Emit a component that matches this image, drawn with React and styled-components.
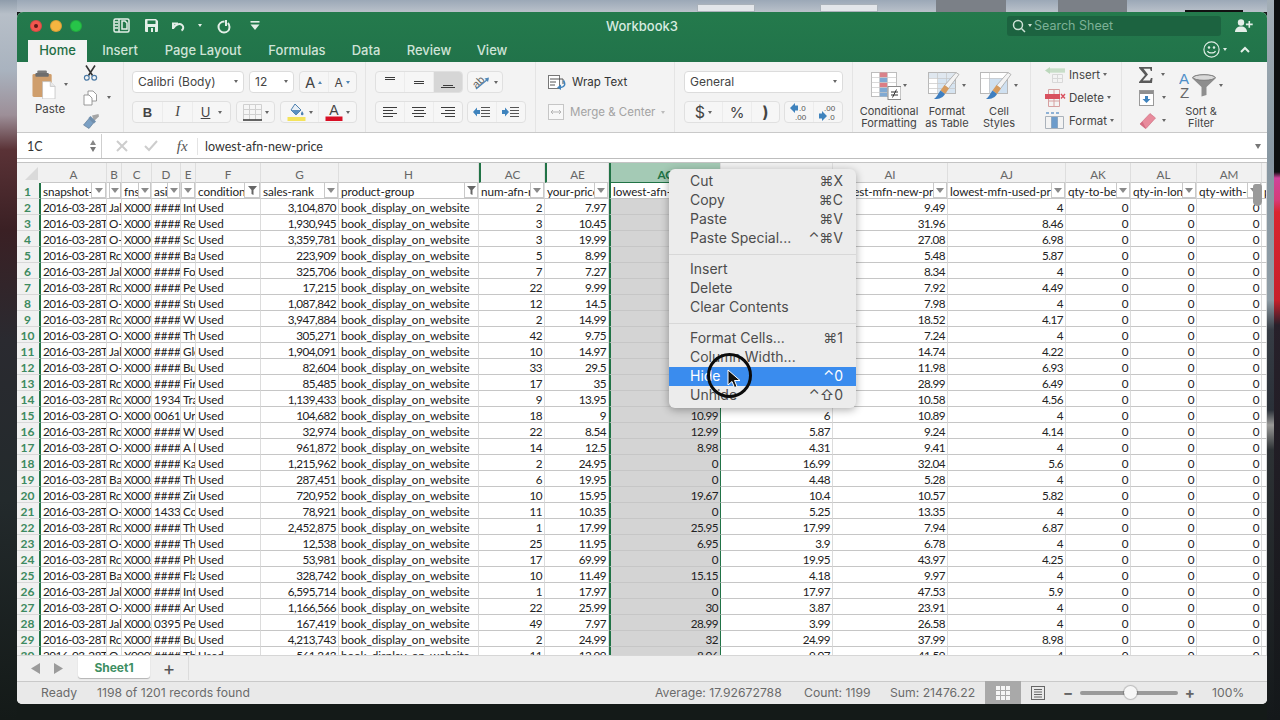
import React from 'react';
import styled, { createGlobalStyle } from 'styled-components';

const UI = '"Inter", "DejaVu Sans", sans-serif';
const CELL = 'Lato, "Liberation Sans", sans-serif';
const GREEN = '#217346';

const GlobalStyle = createGlobalStyle`
  html, body { margin: 0; padding: 0; background: #141a18; }
  * { box-sizing: border-box; }
`;

// column widths in px, same order as the sheet
const COLUMNS = [
  { name: 'A', w: 66, title: 'snapshot-date', filter: 15 },
  { name: 'B', w: 15, title: '', filter: 12 },
  { name: 'C', w: 30, title: 'fnsku', filter: 13 },
  { name: 'D', w: 29, title: 'asin', filter: 13 },
  { name: 'E', w: 15, title: '', filter: 14 },
  { name: 'F', w: 65, title: 'condition', filter: 16, funnel: true },
  { name: 'G', w: 78, title: 'sales-rank', filter: 14 },
  { name: 'H', w: 140, title: 'product-group', filter: 14, funnel: true },
  { name: 'AC', w: 66, title: 'num-afn-new', filter: 14, tick: true },
  { name: 'AE', w: 64, title: 'your-price', filter: 14, tick: true },
  { name: 'AG', w: 112, title: 'lowest-afn-new-price', selected: true },
  { name: 'AH', w: 112, title: 'lowest-afn-used-price' },
  { name: 'AI', w: 115, title: 'lowest-mfn-new-price', filter: 14 },
  { name: 'AJ', w: 118, title: 'lowest-mfn-used-price', filter: 14 },
  { name: 'AK', w: 65, title: 'qty-to-be-liq', filter: 14 },
  { name: 'AL', w: 66, title: 'qty-in-long-term', filter: 14 },
  { name: 'AM', w: 65, title: 'qty-with-removal', filter: 14 },
  { name: '', w: 5, title: 'p' },
];

const ROWS = [
  'Jal|X000VK2|####|Int|3,104,870|2|7.97|||9.49|4',
  'O-|X0007R3|####|Re|1,930,945|3|10.45|||31.96|8.46',
  'O-|X000GT1|####|Sc|3,359,781|3|19.99|||27.08|6.98',
  'Rc|X000VM8|####|Ba|223,909|5|8.99|||5.48|5.87',
  'Jal|X000VP4|####|Fo|325,706|7|7.27|||8.34|4',
  'Rc|X000VQ7|####|Pe|17,215|22|9.99|||7.92|4.49',
  'O-|X0007L2|####|Stu|1,087,842|12|14.5|||7.98|4',
  'Rc|X000VA6|####|Wi|3,947,884|2|14.99|||18.52|4.17',
  'O-|X0007N9|####|Th|305,271|42|9.75|||7.24|4',
  'Jal|X000VH3|####|Glo|1,904,091|10|14.97|||14.74|4.22',
  'O-|X0007D5|####|Bu|82,604|33|29.5|||11.98|6.93',
  'Rc|X000JW1|####|Fir|85,485|17|35|||28.99|6.49',
  'Rc|X000VB2|19340|Tra|1,139,433|9|13.95|||10.58|4.56',
  'O-|X000EF8|00617|Ur|104,682|18|9|10.99|6|10.89|4',
  'Rc|X000VC4|####|Wi|32,974|22|8.54|12.99|5.87|9.24|4.14',
  'O-|X0007G6|####|A l|961,872|14|12.5|8.98|4.31|9.41|4',
  'Rc|X000VU3|####|Ka|1,215,962|2|24.95|0|16.99|32.04|5.6',
  'Ba|X000JY7|####|Th|287,451|6|19.95|0|4.48|5.28|4',
  'Rc|X000VS2|####|Zir|720,952|10|15.95|19.67|10.4|10.57|5.82',
  'O-|X000TZ5|14330|Co|78,921|11|10.35|0|5.25|13.35|4',
  'Rc|X000VE9|####|Th|2,452,875|1|17.99|25.95|17.99|7.94|6.87',
  'O-|X0007J1|####|Th|12,538|25|11.95|6.95|3.9|6.78|4',
  'Rc|X000JK8|####|Ph|53,981|17|69.99|0|19.95|43.97|4.25',
  'Ba|X000JX3|####|Fla|328,742|10|11.49|15.15|4.18|9.97|4',
  'Jal|X000VV6|####|Int|6,595,714|1|17.97|0|17.97|47.53|5.9',
  'O-|X0007W4|####|An|1,166,566|22|25.99|30|3.87|23.91|4',
  'Jal|X000JB5|03950|Pe|167,419|49|7.97|28.99|3.99|26.58|4',
  'Rc|X000VD7|####|Bu|4,213,743|2|24.99|32|24.99|37.99|8.98',
  'O-|X000VF2|####|Th|561,343|11|12.99|8.06|9.07|41.59|4',
];

const Desktop = styled.div`
  position: relative;
  width: 1280px;
  height: 720px;
  overflow: hidden;
  padding: 12px 13px 16px 17px;
  background:
    linear-gradient(to bottom, #0d0f10 0, #0d0f10 172px, #d0429a 178px, #d83a78 200px, #d9252f 212px, #c81f2a 300px, #27202a 325px, #14181a 720px) right top / 6px 100% no-repeat,
    linear-gradient(to bottom, #a3aeb6 0, #8797a2 160px, #8f9da6 300px, #363c44 330px, #2a3038 410px, #9a9a98 425px, #2c3134 450px, #14181a 720px) 1267px 0 / 7px 100% no-repeat,
    linear-gradient(to bottom, #8f9cab 0, #b7bfc8 14px, #a9b3bf 70px, #9d8f98 115px, #5a3236 150px, #3a2024 230px, #2a2a30 340px, #232a2c 500px, #141a18 720px) left top / 17px 100% no-repeat,
    linear-gradient(to bottom, #9ba8b7 0, #b9c1ca 12px, #141a18 12px, #141a18 100%);
`;

const GhostWindow = styled.div`
  position: absolute;
  top: ${p => p.$top}px;
  left: ${p => p.$left}px;
  width: ${p => p.$w}px;
  height: ${p => 12 - p.$top}px;
  background: ${p => p.$bg};
  border: ${p => (p.$outlined ? '1px solid #aab2ba' : 'none')};
`;

const Window = styled.div`
  width: 1250px;
  height: 692px;
  display: flex;
  flex-direction: column;
  border-radius: 6px 6px 5px 5px;
  overflow: hidden;
  background: #fff;
  font-family: ${UI};
`;

const GreenHead = styled.header`
  height: 50px;
  flex: none;
  background: linear-gradient(#247a4c, #21734a);
`;

const TitleRow = styled.div`
  height: 27px;
  display: flex;
  align-items: center;
  position: relative;
  padding: 0 0 0 13px;
`;

const Lights = styled.div`
  display: flex;
  gap: 8px;
  margin-right: 24px;
`;

const Light = styled.span`
  width: 12px;
  height: 12px;
  border-radius: 50%;
  background: ${p => p.$c};
  box-shadow: inset 0 0 0 1px rgba(0, 0, 0, 0.12);
  display: flex;
  align-items: center;
  justify-content: center;
  &::after {
    content: '';
    display: ${p => (p.$dot ? 'block' : 'none')};
    width: 4px;
    height: 4px;
    border-radius: 50%;
    background: #5c1a18;
  }
`;

const QuickTools = styled.div`
  display: flex;
  align-items: center;
  gap: 0;
`;

const QuickSlot = styled.span`
  width: ${p => p.$w}px;
  display: flex;
  justify-content: center;
  align-items: center;
`;

const WindowTitle = styled.div`
  position: absolute;
  left: 575px;
  width: 100px;
  text-align: center;
  color: #d8ebe0;
  font-size: 13px;
  font-weight: 500;
`;

const SearchBox = styled.div`
  margin-left: auto;
  width: 214px;
  height: 20px;
  border-radius: 3px;
  background: #1c6340;
  display: flex;
  align-items: center;
  padding-left: 5px;
  color: #7db197;
  font-size: 12.5px;
  gap: 2px;
`;

const UserSlot = styled.span`
  width: 46px;
  display: flex;
  justify-content: center;
`;

const TabsRow = styled.nav`
  height: 23px;
  display: flex;
  align-items: flex-end;
  padding-left: 11px;
`;

const RibbonTab = styled.div`
  height: 22px;
  width: ${p => p.$w}px;
  display: flex;
  align-items: center;
  justify-content: center;
  padding-bottom: 2px;
  font-size: 13px;
  font-weight: 500;
  color: ${p => (p.$active ? '#1f6e45' : '#cfe3d7')};
  background: ${p => (p.$active ? '#f3f3f3' : 'transparent')};
`;

const HeadRight = styled.div`
  margin-left: auto;
  display: flex;
  align-items: center;
  padding: 0 7px 4px 0;
  gap: 3px;
  height: 22px;
`;

const Ribbon = styled.section`
  height: 71px;
  flex: none;
  display: flex;
  background: #f3f3f3;
  border-bottom: 1px solid #c9c9c9;
  color: #444;
`;

const Group = styled.div`
  width: ${p => p.$w}px;
  flex: ${p => (p.$grow ? '1' : 'none')};
  padding: 9px 0 0 ${p => p.$pad || 0}px;
  border-right: ${p => (p.$last ? 'none' : '1px solid #e4e4e4')};
  display: flex;
  margin: 0;
`;

const Stack = styled.div`
  display: flex;
  flex-direction: column;
  gap: 8px;
`;

const ToolRow = styled.div`
  display: flex;
  gap: ${p => (p.$gap === undefined ? 5 : p.$gap)}px;
  height: 22px;
`;

const PasteCol = styled.div`
  width: 66px;
  padding-left: 15px;
  margin-top: -2px;
  display: flex;
  flex-direction: column;
`;

const PasteIcon = styled.div`
  display: flex;
  align-items: center;
  gap: 8px;
  height: 30px;
`;

const PasteLabel = styled.div`
  font-size: 11.5px;
  margin-top: 3px;
  margin-left: 3px;
`;

const ClipCol = styled.div`
  display: flex;
  flex-direction: column;
  margin-top: -7px;
  height: 68px;
  justify-content: space-between;
  padding: 1px 0 3px;
`;

const ClipLine = styled.div`
  display: flex;
  align-items: center;
  gap: 9px;
`;

const Caret = styled.span`
  display: inline-block;
  flex: none;
  width: 0;
  height: 0;
  border-left: 2.5px solid transparent;
  border-right: 2.5px solid transparent;
  border-top: 3.5px solid ${p => p.$c || '#666'};
`;

const CaretUp = styled(Caret)`
  border-top: none;
  border-bottom: 3.5px solid ${p => p.$c || '#666'};
`;

const Field = styled.div`
  width: ${p => p.$w}px;
  height: 22px;
  background: #fff;
  border: 1px solid #dcdcdc;
  border-radius: 4px;
  display: flex;
  align-items: center;
  justify-content: space-between;
  padding: 0 5px 2px 5px;
  font-size: 12px;
  color: #444;
`;

const Seg = styled.div`
  width: ${p => p.$w}px;
  height: 22px;
  display: flex;
  border: 1px solid #e0e0e0;
  border-radius: 4px;
  background: #f6f6f6;
  overflow: hidden;
  flex: none;
`;

const SegBtn = styled.div`
  flex: ${p => (p.$w ? 'none' : '1')};
  width: ${p => (p.$w ? `${p.$w}px` : 'auto')};
  display: flex;
  align-items: center;
  justify-content: center;
  gap: 3px;
  background: ${p => (p.$pressed ? '#d6d6d6' : 'transparent')};
  font-family: ${p => p.$font || 'inherit'};
  font-size: ${p => p.$size || 12}px;
  font-weight: ${p => p.$weight || 400};
  font-style: ${p => (p.$italic ? 'italic' : 'normal')};
  color: #444;
  & + & { border-left: 1px solid #ececec; }
`;

const UnderU = styled.span`
  font-size: 13px;
  text-decoration: underline;
  margin-right: 5px;
`;

const WrapLine = styled.div`
  height: 22px;
  display: flex;
  align-items: center;
  gap: 6px;
  font-size: 11.5px;
  color: ${p => (p.$off ? '#a3a3a3' : '#333')};
`;

const BigBtn = styled.div`
  width: ${p => p.$w}px;
  display: flex;
  flex-direction: column;
  align-items: center;
`;

const BigIcon = styled.div`
  height: 29px;
  margin-bottom: 5px;
  display: flex;
  align-items: center;
  gap: 2px;
`;

const BigLabel = styled.div`
  font-size: 11px;
  line-height: 12px;
  text-align: center;
  color: #444;
  white-space: nowrap;
`;

const CellsCol = styled.div`
  display: flex;
  flex-direction: column;
  gap: 0;
  margin-top: -8px;
`;

const CellLine = styled.div`
  height: 23px;
  display: flex;
  align-items: center;
  gap: ${p => p.$gap || 3}px;
  font-size: 11.5px;
  color: #444;
`;

const FormulaBar = styled.div`
  height: 26px;
  flex: none;
  display: flex;
  align-items: center;
  padding-top: 1px;
  background: #fff;
  border-bottom: 1px solid #bdbdbd;
  font-size: 12.5px;
  color: #333;
`;

const NameBox = styled.div`
  width: 85px;
  height: 100%;
  display: flex;
  align-items: center;
  justify-content: space-between;
  padding: 0 5px 0 10px;
  border-right: 1px solid #cfcfcf;
  font-family: ${CELL};
`;

const Stepper = styled.span`
  display: flex;
  flex-direction: column;
  gap: 2px;
`;

const StepUp = styled(Caret)`
  border-top: none;
  border-left-width: 3.5px;
  border-right-width: 3.5px;
  border-bottom: 5px solid #888;
`;

const StepDown = styled(Caret)`
  border-left-width: 3.5px;
  border-right-width: 3.5px;
  border-top: 5px solid #777;
`;

const FxTools = styled.div`
  width: 96px;
  height: 17px;
  display: flex;
  align-items: center;
  border-right: 1px solid #e4e4e4;
`;

const FxSlot = styled.span`
  width: ${p => p.$w}px;
  padding-left: ${p => p.$pl || 0}px;
  display: flex;
  justify-content: center;
  font-family: "Liberation Serif", serif;
  font-style: italic;
  font-size: 15px;
  color: #555;
`;

const FormulaText = styled.div`
  flex: 1;
  padding-left: 7px;
  font-family: ${CELL};
`;

const FormulaEnd = styled.div`
  width: 12px;
  display: flex;
`;

const Sheet = styled.div`
  flex: 1;
  min-height: 0;
  overflow: hidden;
  padding-top: 3px;
  background: #fff;
  font-family: ${CELL};
  font-size: 11.7px;
  letter-spacing: -0.08px;
  color: #222;
`;

const HeadRow = styled.div`
  display: flex;
  height: 21px;
  background: #f1f1f1;
  border-top: 1px solid #c4c4c4;
`;

const Corner = styled.div`
  width: 24px;
  flex: none;
  display: flex;
  align-items: flex-end;
  justify-content: flex-end;
  padding: 0 3px 3px 0;
`;

const ColHead = styled.div`
  width: ${p => p.$w}px;
  flex: none;
  display: flex;
  align-items: center;
  justify-content: center;
  padding-top: 2px;
  color: ${p => (p.$selected ? GREEN : '#666')};
  font-weight: ${p => (p.$selected ? 700 : 400)};
  background: ${p => (p.$selected ? '#a4cab5' : 'transparent')};
  border-right: 1px solid #dedede;
  border-bottom: 1px solid ${p => (p.$selected ? GREEN : '#c8c8c8')};
  border-left: ${p => (p.$selected || p.$tick ? `2.5px solid ${GREEN}` : 'none')};
`;

const Row = styled.div`
  display: flex;
  height: 16px;
`;

const RowHead = styled.div`
  width: 24px;
  flex: none;
  background: #f1f1f1;
  border-right: 2px solid ${GREEN};
  border-bottom: 1px solid #d8d8d8;
  color: #3d8a60;
  font-size: 12px;
  font-weight: 700;
  text-align: center;
  line-height: 17px;
  padding-right: 1px;
`;

const Cell = styled.div`
  position: relative;
  width: ${p => p.$w}px;
  flex: none;
  height: 16px;
  line-height: 17px;
  overflow: hidden;
  white-space: nowrap;
  padding: 0 ${p => (p.$right ? 2 : 1)}px 0 2px;
  text-align: ${p => (p.$right ? 'right' : 'left')};
  letter-spacing: ${p => (p.$tight ? '-0.5px' : 'inherit')};
  background: ${p => (p.$selected ? '#d4d4d4' : '#fff')};
  border-right: 1px solid ${p => (p.$selected ? GREEN : '#dcdcdc')};
  border-bottom: 1px solid #c6c6c6;
  border-left: ${p => (p.$selected ? `2.5px solid ${GREEN}` : 'none')};
`;

const TitleCell = styled(Cell)`
  background: #fff;
`;

const FilterBtn = styled.span`
  position: absolute;
  right: 0;
  top: 0;
  width: ${p => p.$w}px;
  height: 15px;
  background: #fff;
  border: 1px solid #c9c9c9;
  border-top: none;
  display: flex;
  align-items: center;
  justify-content: center;
`;

const FilterTri = styled.span`
  width: 0;
  height: 0;
  border-left: 4px solid transparent;
  border-right: 4px solid transparent;
  border-top: 5px solid #8a8a8a;
`;

const ResizeBlob = styled.div`
  position: absolute;
  left: 1253px;
  top: 184px;
  width: 9px;
  height: 22px;
  border-radius: 3px 3px 5px 5px;
  background: #9a9a9a;
`;

const TabBar = styled.div`
  height: 26px;
  flex: none;
  display: flex;
  align-items: flex-start;
  background: #efefef;
  padding-left: 7px;
  border-top: 1px solid #d6d6d6;
  margin-top: 0;
`;

const ArrowSlot = styled.span`
  width: 23px;
  height: 24px;
  display: flex;
  align-items: center;
  justify-content: center;
`;

const SheetTab = styled.div`
  width: 72px;
  height: 22px;
  margin-left: 8px;
  background: #fff;
  border-radius: 0 0 3px 3px;
  box-shadow: 0 1px 1px rgba(0, 0, 0, 0.25);
  color: #3d8f63;
  font-size: 12px;
  font-weight: 700;
  display: flex;
  align-items: center;
  justify-content: center;
`;

const AddSheet = styled.div`
  width: 39px;
  height: 24px;
  border-right: 1px solid #dcdcdc;
  display: flex;
  align-items: center;
  justify-content: center;
  font-size: 19px;
  color: #555;
`;

const StatusBar = styled.footer`
  height: 23px;
  flex: none;
  display: flex;
  align-items: center;
  padding-bottom: 1px;
  background: #e9e9e9;
  border-top: 1px solid #c9c9c9;
  font-size: 12.2px;
  color: #6b6b6b;
`;

const StatusText = styled.span`
  margin-left: ${p => p.$ml}px;
  width: ${p => p.$w}px;
  flex: none;
  white-space: nowrap;
`;

const ViewBtn = styled.div`
  width: ${p => p.$w}px;
  height: 23px;
  margin-left: ${p => p.$ml || 0}px;
  display: flex;
  align-items: center;
  justify-content: center;
  background: ${p => (p.$on ? '#a9a9a9' : 'transparent')};
`;

const Zoom = styled.div`
  margin-left: 8px;
  width: 132px;
  display: flex;
  align-items: center;
  gap: 7px;
  font-size: 15px;
  font-weight: 700;
  color: #666;
`;

const SliderTrack = styled.div`
  position: relative;
  flex: 1;
  height: 4px;
  border-radius: 2px;
  background: #9a9a9a;
`;

const SliderThumb = styled.span`
  position: absolute;
  left: 44px;
  top: -4.5px;
  width: 13px;
  height: 13px;
  border-radius: 50%;
  background: #f7f7f7;
  box-shadow: 0 0 1px 1px rgba(0, 0, 0, 0.2);
`;

const Menu = styled.div`
  position: absolute;
  left: 669px;
  top: 169px;
  width: 187px;
  padding: 3px 0;
  border-radius: 6px;
  background: #ececec;
  box-shadow: 0 2px 9px rgba(0, 0, 0, 0.32);
  font-family: ${UI};
  font-size: 14px;
  color: #4c4c4c;
`;

const MenuItem = styled.div`
  height: 19px;
  display: flex;
  align-items: center;
  justify-content: space-between;
  padding: 0 13px 2px 21px;
  background: ${p => (p.$active ? '#3a8cee' : 'transparent')};
  color: ${p => (p.$active ? '#fff' : 'inherit')};
`;

const MenuRule = styled.div`
  height: 1px;
  margin: 6px 0 5px;
  background: #d8d8d8;
`;

const Ring = styled.div`
  position: absolute;
  left: 707px;
  top: 353px;
  width: 45px;
  height: 45px;
  border-radius: 50%;
  border: 3.5px solid #0b0b0b;
`;

const Pointer = styled.svg`
  position: absolute;
  left: 727px;
  top: 369px;
`;

// ---- icons ----
const SidebarIcon = () => (
  <svg width="17" height="15" viewBox="0 0 17 15" fill="none" stroke="#e4efe8" strokeWidth="1.5">
    <rect x="1" y="1" width="15" height="13" rx="1.5" />
    <path d="M6 1v13M1.5 4H5M1.5 7H5M1.5 10H5M9 3h3l2 2v6H9z" />
  </svg>
);
const SaveIcon = () => (
  <svg width="15" height="15" viewBox="0 0 15 15">
    <path d="M1 2a1 1 0 0 1 1-1h10l2 2v10a1 1 0 0 1-1 1H2a1 1 0 0 1-1-1z" fill="#e4efe8" />
    <rect x="3.5" y="2.5" width="8" height="3.5" fill="#247a4c" />
    <rect x="4" y="9" width="7" height="5" fill="#247a4c" />
    <rect x="7" y="10" width="2" height="4" fill="#e4efe8" />
  </svg>
);
const UndoIcon = () => (
  <svg width="16" height="13" viewBox="0 0 16 13" fill="none" stroke="#e4efe8" strokeWidth="2">
    <path d="M3 10V4M2 4.5h6" />
    <path d="M3.5 9c1.5-3.5 6-5 8.5-3 2 1.6 1.5 4.5-.5 5.5" />
  </svg>
);
const RedoIcon = () => (
  <svg width="14" height="16" viewBox="0 0 14 16" fill="none" stroke="#e4efe8" strokeWidth="2">
    <path d="M9 2v5h-1" />
    <path d="M7.5 3.5C4 3.6 1.5 6 1.5 9s2.4 5.5 5.5 5.5 5.5-2.4 5.5-5.500c0-1.600-.6-3-1.600-4" />
  </svg>
);
const CustomizeIcon = () => (
  <svg width="10" height="9" viewBox="0 0 10 9" fill="#e4efe8">
    <rect x="0.5" y="0" width="9" height="1.6" />
    <path d="M0.5 3.5h9L5 9z" />
  </svg>
);
const SearchIcon = () => (
  <svg width="14" height="14" viewBox="0 0 14 14" fill="none" stroke="#cfe3d7" strokeWidth="1.5">
    <circle cx="6" cy="6" r="4.5" />
    <path d="M9.5 9.5 13 13" />
  </svg>
);
const AddUserIcon = () => (
  <svg width="18" height="13" viewBox="0 0 18 13" fill="#e4efe8">
    <circle cx="6" cy="3.5" r="3.2" />
    <path d="M0 13c0-3.5 2.5-5.5 6-5.5s6 2 6 5.5z" />
    <path d="M13.5 2h1.6v2.6h2.6v1.6h-2.6v2.6h-1.6V6.2h-2.6V4.6h2.6z" />
  </svg>
);
const SmileIcon = () => (
  <svg width="17" height="17" viewBox="0 0 17 17" fill="none" stroke="#dcebe2" strokeWidth="1.2">
    <circle cx="8.5" cy="8.5" r="7.6" />
    <circle cx="6" cy="6.5" r="0.7" fill="#dcebe2" />
    <circle cx="11" cy="6.5" r="0.7" fill="#dcebe2" />
    <path d="M4.5 10c1 2.6 7 2.6 8 0" />
  </svg>
);
const ChevronUp = () => (
  <svg width="10" height="7" viewBox="0 0 10 7" fill="none" stroke="#e4efe8" strokeWidth="2">
    <path d="M1 6l4-4 4 4" />
  </svg>
);
const PasteSvg = () => (
  <svg width="24" height="29" viewBox="0 0 25 30">
    <rect x="0.5" y="4" width="20" height="24" rx="1.5" fill="#cf9e6c" />
    <rect x="5.5" y="0.5" width="10" height="3" rx="1" fill="#7a7a7a" />
    <rect x="3.5" y="3" width="14" height="4" rx="1" fill="#6d6d6d" />
    <path d="M11 12h8l5 5v13H11z" fill="#fff" stroke="#bbb" strokeWidth="0.7" />
    <path d="M19 12v5h5" fill="#e8e8e8" stroke="#bbb" strokeWidth="0.7" />
  </svg>
);
const ScissorsSvg = () => (
  <svg width="15" height="16" viewBox="0 0 15 16" fill="none">
    <path d="M3 0.5 9.5 10.5M12 0.5 5.5 10.5" stroke="#333" strokeWidth="1.6" />
    <circle cx="3.8" cy="12.8" r="2.4" stroke="#4b7aa5" strokeWidth="1.2" />
    <circle cx="11.2" cy="12.8" r="2.4" stroke="#4b7aa5" strokeWidth="1.2" />
  </svg>
);
const CopySvg = () => (
  <svg width="15" height="16" viewBox="0 0 15 16" fill="#fff" stroke="#8f8f8f" strokeWidth="0.9">
    <path d="M5 1h5l3.5 3.5V11H5z" />
    <path d="M1 5h5l3 3v7H1z" />
  </svg>
);
const BrushSvg = () => (
  <svg width="17" height="15" viewBox="0 0 17 15">
    <path d="M9 1.5 15.5 0 16 2.5 11 7z" fill="#a5a5a5" />
    <path d="M7.5 2 13 7.5 11 9.5 5.5 4z" fill="#6f8fae" />
    <path d="M6 4.5 10.5 9 6 14.5 0.5 11z" fill="#7ba0c4" stroke="#55708c" strokeWidth="0.6" />
  </svg>
);
const BorderSvg = () => (
  <svg width="19" height="17" viewBox="0 0 19 17" fill="none">
    <path d="M.5.5h18M.5 5.5h18M.5 10.5h18M.5.5v15M6.5.5v15M12.5.5v15M18.5.5v15" stroke="#d0d0d0" />
    <path d="M0 16h19" stroke="#333" strokeWidth="1.4" />
  </svg>
);
const FillSvg = () => (
  <svg width="19" height="18" viewBox="0 0 19 18">
    <path d="M8 1 14 7 9 12 4 7z" fill="#e9eff5" stroke="#4f81b0" strokeWidth="1" />
    <path d="M4.5 7h9L9 12z" fill="#5b8fc0" />
    <path d="M15 8c1 1.5 1.5 2.2 1.5 3a1.3 1.3 0 0 1-2.6 0c0-.8.5-1.500 1.100-3z" fill="#4f81b0" />
    <rect x="0.5" y="14" width="18" height="4" fill="#f4e35c" />
  </svg>
);
const FontColorSvg = () => (
  <svg width="18" height="18" viewBox="0 0 18 18">
    <text x="9" y="11.5" textAnchor="middle" fontSize="14" fontFamily="Liberation Sans" fill="#444">A</text>
    <rect x="0.5" y="13.5" width="17" height="4.5" fill="#d80f25" />
  </svg>
);
const Lines = ({ rows }) => (
  <svg width="16" height="14" viewBox="0 0 16 14" stroke="#3c3c3c" strokeWidth="1" fill="none">
    {rows.map((r, i) => <path key={i} d={`M${r[1]} ${r[0]}.5H${r[2]}`} />)}
  </svg>
);
const OrientSvg = () => (
  <svg width="19" height="18" viewBox="0 0 19 18" fill="none">
    <text x="0" y="13" fontSize="11" fontFamily="Liberation Sans" fill="#666" transform="rotate(-45 6 9)">ab</text>
    <path d="M4 16 16 6" stroke="#4f87b8" strokeWidth="1.3" />
    <path d="M12.5 5.5 17 4.5 16 9z" fill="#4f87b8" />
  </svg>
);
const IndentSvg = ({ right }) => (
  <svg width="18" height="12" viewBox="0 0 18 12" fill="none">
    <path d="M8 1.5h9M8 4.5h9M8 7.5h9M8 10.5h9" stroke="#555" />
    <path d={right ? 'M0 4h3V1.500L7 6 3 10.500V8H0z' : 'M7 4H4V1.500L0 6l4 4.500V8h3z'} fill="#3f83bd" />
  </svg>
);
const WrapSvg = () => (
  <svg width="18" height="15" viewBox="0 0 18 15" fill="none">
    <rect x="0.5" y="0.5" width="11" height="13" fill="#fff" stroke="#777" />
    <path d="M2 4h13v5M2 7h6M2 10h5" stroke="#555" />
    <path d="M15.5 5.5c2.5 4 1 7-4 7" stroke="#3f83bd" strokeWidth="1.5" />
    <path d="M13 9.5 9 12.500l4 2.500z" fill="#3f83bd" />
  </svg>
);
const MergeSvg = () => (
  <svg width="16" height="16" viewBox="0 0 16 16" fill="none" stroke="#c6c6c6">
    <rect x="0.5" y="0.5" width="15" height="15" fill="#f8f8f8" />
    <path d="M3 8h10M3 8l2-2M3 8l2 2M13 8l-2-2M13 8l-2 2" stroke="#b5b5b5" />
  </svg>
);
const DecimalSvg = ({ dec }) => (
  <svg width="26" height="18" viewBox="0 0 26 18">
    <text x={dec ? 9 : 13} y="7.5" fontSize="8" fontFamily="Liberation Sans" fill="#555">{dec ? '.00' : '.0'}</text>
    <text x={dec ? 13 : 9} y="16.5" fontSize="8" fontFamily="Liberation Sans" fill="#555">{dec ? '.0' : '.00'}</text>
    <path d={dec ? 'M4 10.500h3V8l5 5-5 5v-2.500H4z' : 'M12 2.500H9V0L4 5l5 5V7.500h3z'} fill="#3f83bd" />
  </svg>
);
const CondSvg = () => (
  <svg width="30" height="28" viewBox="0 0 30 28">
    <rect x="0.5" y="0.5" width="25" height="24" fill="#fff" stroke="#bdbdbd" />
    <rect x="8.5" y="0.5" width="8" height="5" fill="#d9828a" />
    <rect x="8.5" y="5.5" width="8" height="5" fill="#7fa9d3" />
    <rect x="8.5" y="10.5" width="8" height="5" fill="#dc7d84" />
    <rect x="8.5" y="15.5" width="8" height="9" fill="#7fa9d3" />
    <path d="M.5 5.500h25M.5 10.500h25M.5 15.500h25M.5 20.500h25M8.500.5v24M16.500.5v24" stroke="#c9c9c9" strokeWidth="0.7" fill="none" />
    <rect x="17" y="14.5" width="13" height="13" fill="#fff" stroke="#8a8a8a" />
    <path d="M20 20h7M20 23h7M25.500 17.500l-4 8" stroke="#333" fill="none" />
  </svg>
);
const BrushBody = () => (
  <>
    <path d="M28 0.500 31 2.500 20.500 16.500 16.500 13.500z" fill="#f3f3f3" stroke="#9c9c9c" strokeWidth="0.7" />
    <path d="M16.500 13 21 16.500 17 22 12.500 18.500z" fill="#d69b5e" />
    <path d="M12.500 18.500 17 22c-2 4-7 5.500-11 5 2.500-1.500 4-5 6.500-8.500z" fill="#3f7fc0" />
  </>
);
const TableSvg = () => (
  <svg width="32" height="28" viewBox="0 0 32 28">
    <rect x="0.5" y="0.5" width="27" height="21" fill="#fff" stroke="#b8b8b8" />
    <rect x="1" y="1" width="26" height="5" fill="#dfe7ef" />
    <rect x="10" y="6" width="17" height="15" fill="#d6e4f1" />
    <path d="M.5 6.500h27M.5 11.500h27M.5 16.500h27M9.500.5v21M18.500.5v21" stroke="#c6c6c6" strokeWidth="0.7" fill="none" />
    <BrushBody />
  </svg>
);
const StylesSvg = () => (
  <svg width="32" height="28" viewBox="0 0 32 28">
    <rect x="0.5" y="0.5" width="27" height="21" fill="#fff" stroke="#b8b8b8" />
    <rect x="9" y="6" width="18" height="15" fill="#cfe0f0" />
    <path d="M.5 6.500h27M9.500.5v21" stroke="#c6c6c6" strokeWidth="0.7" fill="none" />
    <BrushBody />
  </svg>
);
const InsertSvg = () => (
  <svg width="21" height="16" viewBox="0 0 21 16" fill="none">
    <path d="M5 1h15v5H5z" fill="#d6e6d6" />
    <path d="M0 3.500 5 0v7z" fill="#bcd8bc" />
    <path d="M5 3.500h15" stroke="#c8ddc8" strokeWidth="3" />
    <path d="M7.500 7.500h10v8h-10zM7.500 11.500h10M12.500 7.500v8" stroke="#d8d8d8" />
  </svg>
);
const DeleteSvg = () => (
  <svg width="21" height="18" viewBox="0 0 21 18" fill="none">
    <path d="M3.500.5h11v17h-11zM3.500 12h11M9 .5v17" stroke="#d6a0a0" />
    <rect x="0" y="5" width="15" height="5" fill="#d8505e" />
    <path d="M16 5l4 4.500M20 5l-4 4.500" stroke="#d8505e" strokeWidth="1.4" />
  </svg>
);
const FormatSvg = () => (
  <svg width="21" height="17" viewBox="0 0 21 17" fill="none">
    <path d="M.5 4.500h18v12H.5zM6.500 4.500v12M12.500 4.500v12" stroke="#aab2bb" />
    <rect x="6.5" y="5" width="6" height="11" fill="#6d9ccb" />
    <path d="M1 1h3M6 1h3M11 1h3" stroke="#6d9ccb" strokeWidth="1.5" />
  </svg>
);
const SigmaSvg = () => (
  <svg width="14" height="16" viewBox="0 0 14 16" fill="#5a5a5a">
    <path d="M0 0h13v4h-1.200l-.8-2.200H4.500L9 7.500 3.800 13.500H11l.9-2.500H13.500L13 16H0v-1l6-7L0 1z" />
  </svg>
);
const FillDownSvg = () => (
  <svg width="15" height="16" viewBox="0 0 15 16" fill="none">
    <rect x="0.5" y="0.5" width="14" height="15" fill="#fff" stroke="#9a9a9a" />
    <rect x="1" y="1" width="13" height="3" fill="#8f8f8f" />
    <path d="M6 6h3v3h2.500L7.500 13 3.500 9H6z" fill="#3f83bd" />
  </svg>
);
const EraserSvg = () => (
  <svg width="17" height="16" viewBox="0 0 17 16">
    <path d="M11 .5 16.500 5 7 15.500 1 11z" fill="#e88b9c" stroke="#c96a7c" strokeWidth="0.6" />
    <path d="M1 11 6 15.500 7 15.500 3.500 8.500z" fill="#d46d82" />
  </svg>
);
const SortSvg = () => (
  <svg width="38" height="29" viewBox="0 0 38 29">
    <text x="0" y="13" fontSize="15" fontFamily="Liberation Sans" fill="#4f8fc8">A</text>
    <text x="1" y="27" fontSize="15" fontFamily="Liberation Sans" fill="#666">Z</text>
    <path d="M13 7a12 3.500 0 0 1 24 0L27.500 16v8l-5 1.500V16z" fill="#8e8e8e" />
    <ellipse cx="25" cy="6.5" rx="11" ry="2.800" fill="#d9d9d9" stroke="#7c7c7c" />
  </svg>
);
const XSvg = () => (
  <svg width="12" height="12" viewBox="0 0 12 12" stroke="#cdcdcd" strokeWidth="2"><path d="M1 1l10 10M11 1 1 11" /></svg>
);
const CheckSvg = () => (
  <svg width="14" height="12" viewBox="0 0 14 12" fill="none" stroke="#cdcdcd" strokeWidth="2"><path d="M1 6l4 4 8-9" /></svg>
);
const TriSvg = ({ left }) => (
  <svg width="9" height="11" viewBox="0 0 9 11" fill="#9b9b9b"><path d={left ? 'M9 0v11L0 5.500z' : 'M0 0v11l9-5.500z'} /></svg>
);
const NormalViewSvg = () => (
  <svg width="14" height="14" viewBox="0 0 14 14" fill="#f6f6f6">
    {[0, 5, 10].map(y => [0, 5, 10].map(x => <rect key={`${x}${y}`} x={x} y={y} width="4" height="4" />))}
  </svg>
);
const PageViewSvg = () => (
  <svg width="14" height="14" viewBox="0 0 14 14" fill="none" stroke="#666">
    <rect x="0.5" y="0.5" width="13" height="13" />
    <path d="M3 3.500h8M3 6h8M3 8.500h8M3 11h8" />
  </svg>
);
const CornerSvg = () => (
  <svg width="13" height="13" viewBox="0 0 13 13"><path d="M13 0v13H0z" fill="#dadada" /></svg>
);
const FunnelTri = () => (
  <svg width="9" height="9" viewBox="0 0 9 9" fill="#666"><path d="M0 0h9L5.500 4v5l-2-1V4z" /></svg>
);

const Top = [[2, 3, 13], [4, 3, 13]];
const Mid = [[6, 3, 13], [8, 3, 13]];
const Bot = [[10, 3, 13], [12, 1, 15]];
const AL = [[2, 1, 15], [5, 1, 11], [8, 1, 15], [11, 1, 11]];
const AC = [[2, 1, 15], [5, 3, 13], [8, 1, 15], [11, 3, 13]];
const AR = [[2, 1, 15], [5, 5, 15], [8, 1, 15], [11, 5, 15]];

function Cells({ row, index }) {
  const [b, c, d, e, rank, num, price, low, used, ai, aj] = row.split('|');
  const values = [
    ['2016-03-28T07:14', false], [b, false], [c, false], [d, false], [e, false], ['Used', false],
    [rank, true], ['book_display_on_website', false], [num, true], [price, true],
    [low, true], [used, true], [ai, true], [aj, true], ['0', true], ['0', true], ['0', true], ['', false],
  ];
  return (
    <Row>
      <RowHead>{index + 2}</RowHead>
      {values.map(([v, right], i) => (
        <Cell
          key={i}
          $w={COLUMNS[i].w}
          $right={right}
          $tight={right || i === 0 || i === 2}
          $selected={COLUMNS[i].selected}
        >
          {v}
        </Cell>
      ))}
    </Row>
  );
}

function App() {
  return (
    <Desktop>
      <GlobalStyle />
      <GhostWindow $left={697} $top={4} $w={58} $bg="#e3e6ea" $outlined />
      <GhostWindow $left={820} $top={4} $w={58} $bg="#e3e6ea" $outlined />
      <GhostWindow $left={936} $top={0} $w={70} $bg="#7b8087" />
      <GhostWindow $left={1058} $top={0} $w={69} $bg="#7b8087" />
      <GhostWindow $left={1185} $top={10} $w={58} $bg="#111" />

      <Window>
        <GreenHead>
          <TitleRow>
            <Lights>
              <Light $c="#f2564e" $dot />
              <Light $c="#f5b540" />
              <Light $c="#27c549" />
            </Lights>
            <QuickTools>
              <QuickSlot $w={30}><SidebarIcon /></QuickSlot>
              <QuickSlot $w={31}><SaveIcon /></QuickSlot>
              <QuickSlot $w={22}><UndoIcon /></QuickSlot>
              <QuickSlot $w={22}><Caret $c="#e4efe8" /></QuickSlot>
              <QuickSlot $w={26}><RedoIcon /></QuickSlot>
              <QuickSlot $w={36}><CustomizeIcon /></QuickSlot>
            </QuickTools>
            <WindowTitle>Workbook3</WindowTitle>
            <SearchBox>
              <SearchIcon />
              <Caret $c="#cfe3d7" />
              <span>Search Sheet</span>
            </SearchBox>
            <UserSlot><AddUserIcon /></UserSlot>
          </TitleRow>
          <TabsRow>
            <RibbonTab $active $w={59}>Home</RibbonTab>
            <RibbonTab $w={66}>Insert</RibbonTab>
            <RibbonTab $w={100}>Page Layout</RibbonTab>
            <RibbonTab $w={88}>Formulas</RibbonTab>
            <RibbonTab $w={50}>Data</RibbonTab>
            <RibbonTab $w={76}>Review</RibbonTab>
            <RibbonTab $w={50}>View</RibbonTab>
            <HeadRight>
              <SmileIcon />
              <Caret $c="#dcebe2" />
              <QuickSlot $w={30}><ChevronUp /></QuickSlot>
            </HeadRight>
          </TabsRow>
        </GreenHead>

        <Ribbon>
          <Group $w={107}>
            <PasteCol>
              <PasteIcon><PasteSvg /><Caret /></PasteIcon>
              <PasteLabel>Paste</PasteLabel>
            </PasteCol>
            <ClipCol>
              <ClipLine><ScissorsSvg /></ClipLine>
              <ClipLine><CopySvg /><Caret /></ClipLine>
              <ClipLine><BrushSvg /></ClipLine>
            </ClipCol>
          </Group>

          <Group $w={242} $pad={8}>
            <Stack>
              <ToolRow>
                <Field $w={112}>Calibri (Body)<Caret /></Field>
                <Field $w={45}>12<Caret /></Field>
                <Seg $w={58}>
                  <SegBtn $size={15}>A<CaretUp $c="#4f87b8" /></SegBtn>
                  <SegBtn $size={12}>A<Caret $c="#4f87b8" /></SegBtn>
                </Seg>
              </ToolRow>
              <ToolRow>
                <Seg $w={99}>
                  <SegBtn $w={29} $weight={700} $font={'"Liberation Sans", sans-serif'} $size={13}>B</SegBtn>
                  <SegBtn $w={30} $italic $font={'"Liberation Serif", serif'} $size={14}>I</SegBtn>
                  <SegBtn><UnderU>U</UnderU><Caret /></SegBtn>
                </Seg>
                <Seg $w={39}><SegBtn><BorderSvg /><Caret /></SegBtn></Seg>
                <Seg $w={77}>
                  <SegBtn><FillSvg /><Caret /></SegBtn>
                  <SegBtn><FontColorSvg /><Caret /></SegBtn>
                </Seg>
              </ToolRow>
            </Stack>
          </Group>

          <Group $w={170} $pad={9}>
            <Stack>
              <ToolRow $gap={4}>
                <Seg $w={88}>
                  <SegBtn><Lines rows={Top} /></SegBtn>
                  <SegBtn><Lines rows={Mid} /></SegBtn>
                  <SegBtn $pressed><Lines rows={Bot} /></SegBtn>
                </Seg>
                <Seg $w={36}><SegBtn><OrientSvg /><Caret /></SegBtn></Seg>
              </ToolRow>
              <ToolRow $gap={4}>
                <Seg $w={88}>
                  <SegBtn><Lines rows={AL} /></SegBtn>
                  <SegBtn><Lines rows={AC} /></SegBtn>
                  <SegBtn><Lines rows={AR} /></SegBtn>
                </Seg>
                <Seg $w={59}>
                  <SegBtn><IndentSvg /></SegBtn>
                  <SegBtn><IndentSvg right /></SegBtn>
                </Seg>
              </ToolRow>
            </Stack>
          </Group>

          <Group $w={139} $pad={12}>
            <Stack>
              <WrapLine><WrapSvg />Wrap Text</WrapLine>
              <WrapLine $off><MergeSvg />Merge &amp; Center<Caret $c="#bbb" /></WrapLine>
            </Stack>
          </Group>

          <Group $w={178} $pad={9}>
            <Stack>
              <Field $w={159}>General<Caret /></Field>
              <ToolRow $gap={4}>
                <Seg $w={96}>
                  <SegBtn $w={37} $size={16}>$<Caret /></SegBtn>
                  <SegBtn $w={29} $size={15}>%</SegBtn>
                  <SegBtn $size={16} $weight={700}>)</SegBtn>
                </Seg>
                <Seg $w={59}>
                  <SegBtn><DecimalSvg /></SegBtn>
                  <SegBtn><DecimalSvg dec /></SegBtn>
                </Seg>
              </ToolRow>
            </Stack>
          </Group>

          <Group $w={178}>
            <BigBtn $w={72}>
              <BigIcon><CondSvg /><Caret /></BigIcon>
              <BigLabel>Conditional<br />Formatting</BigLabel>
            </BigBtn>
            <BigBtn $w={44}>
              <BigIcon><TableSvg /><Caret /></BigIcon>
              <BigLabel>Format<br />as Table</BigLabel>
            </BigBtn>
            <BigBtn $w={60}>
              <BigIcon><StylesSvg /><Caret /></BigIcon>
              <BigLabel>Cell<br />Styles</BigLabel>
            </BigBtn>
          </Group>

          <Group $w={91} $pad={14}>
            <CellsCol>
              <CellLine><InsertSvg />Insert<Caret /></CellLine>
              <CellLine><DeleteSvg />Delete<Caret /></CellLine>
              <CellLine><FormatSvg />Format<Caret /></CellLine>
            </CellsCol>
          </Group>

          <Group $grow $last $pad={17}>
            <CellsCol>
              <CellLine $gap={8}><SigmaSvg /><Caret /></CellLine>
              <CellLine $gap={8}><FillDownSvg /><Caret /></CellLine>
              <CellLine $gap={6}><EraserSvg /><Caret /></CellLine>
            </CellsCol>
            <BigBtn $w={70}>
              <BigIcon><SortSvg /><Caret /></BigIcon>
              <BigLabel>Sort &amp;<br />Filter</BigLabel>
            </BigBtn>
          </Group>
        </Ribbon>

        <FormulaBar>
          <NameBox>
            <span>1C</span>
            <Stepper><StepUp /><StepDown /></Stepper>
          </NameBox>
          <FxTools>
            <FxSlot $w={40}><XSvg /></FxSlot>
            <FxSlot $w={20}><CheckSvg /></FxSlot>
            <FxSlot $w={36} $pl={6}>fx</FxSlot>
          </FxTools>
          <FormulaText>lowest-afn-new-price</FormulaText>
          <FormulaEnd><StepDown /></FormulaEnd>
        </FormulaBar>

        <Sheet>
          <HeadRow>
            <Corner><CornerSvg /></Corner>
            {COLUMNS.map(c => (
              <ColHead key={c.name} $w={c.w} $selected={c.selected} $tick={c.tick}>{c.name}</ColHead>
            ))}
          </HeadRow>
          <Row>
            <RowHead>1</RowHead>
            {COLUMNS.map(c => (
              <TitleCell key={c.name} $w={c.w} $selected={c.selected}>
                {c.title}
                {c.filter && (
                  <FilterBtn $w={c.filter}>
                    {c.funnel ? <FunnelTri /> : <FilterTri />}
                  </FilterBtn>
                )}
              </TitleCell>
            ))}
          </Row>
          {ROWS.map((r, i) => <Cells key={i} row={r} index={i} />)}
        </Sheet>

        <TabBar>
          <ArrowSlot><TriSvg left /></ArrowSlot>
          <ArrowSlot><TriSvg /></ArrowSlot>
          <SheetTab>Sheet1</SheetTab>
          <AddSheet>+</AddSheet>
        </TabBar>

        <StatusBar>
          <StatusText $ml={24} $w={56}>Ready</StatusText>
          <StatusText $ml={0} $w={200}>1198 of 1201 records found</StatusText>
          <StatusText $ml={358} $w={149}>Average: 17.92672788</StatusText>
          <StatusText $ml={0} $w={86}>Count: 1199</StatusText>
          <StatusText $ml={0} $w={95}>Sum: 21476.22</StatusText>
          <ViewBtn $on $w={36}><NormalViewSvg /></ViewBtn>
          <ViewBtn $w={34}><PageViewSvg /></ViewBtn>
          <Zoom>
            −
            <SliderTrack><SliderThumb /></SliderTrack>
            +
          </Zoom>
          <StatusText $ml={17} $w={40}>100%</StatusText>
        </StatusBar>
      </Window>

      <ResizeBlob />

      <Menu>
        <MenuItem>Cut<span>⌘X</span></MenuItem>
        <MenuItem>Copy<span>⌘C</span></MenuItem>
        <MenuItem>Paste<span>⌘V</span></MenuItem>
        <MenuItem>Paste Special...<span>⌃⌘V</span></MenuItem>
        <MenuRule />
        <MenuItem>Insert</MenuItem>
        <MenuItem>Delete</MenuItem>
        <MenuItem>Clear Contents</MenuItem>
        <MenuRule />
        <MenuItem>Format Cells...<span>⌘1</span></MenuItem>
        <MenuItem>Column Width...</MenuItem>
        <MenuItem $active>Hide<span>⌃0</span></MenuItem>
        <MenuItem>Unhide<span>⌃⇧0</span></MenuItem>
      </Menu>

      <Ring />
      <Pointer width="14" height="21" viewBox="0 0 14 21">
        <path d="M1 1v15l4-3.500 2.500 6 2.500-1-2.500-6H13z" fill="#111" stroke="#fff" strokeWidth="1" />
      </Pointer>
    </Desktop>
  );
}

export default App;
